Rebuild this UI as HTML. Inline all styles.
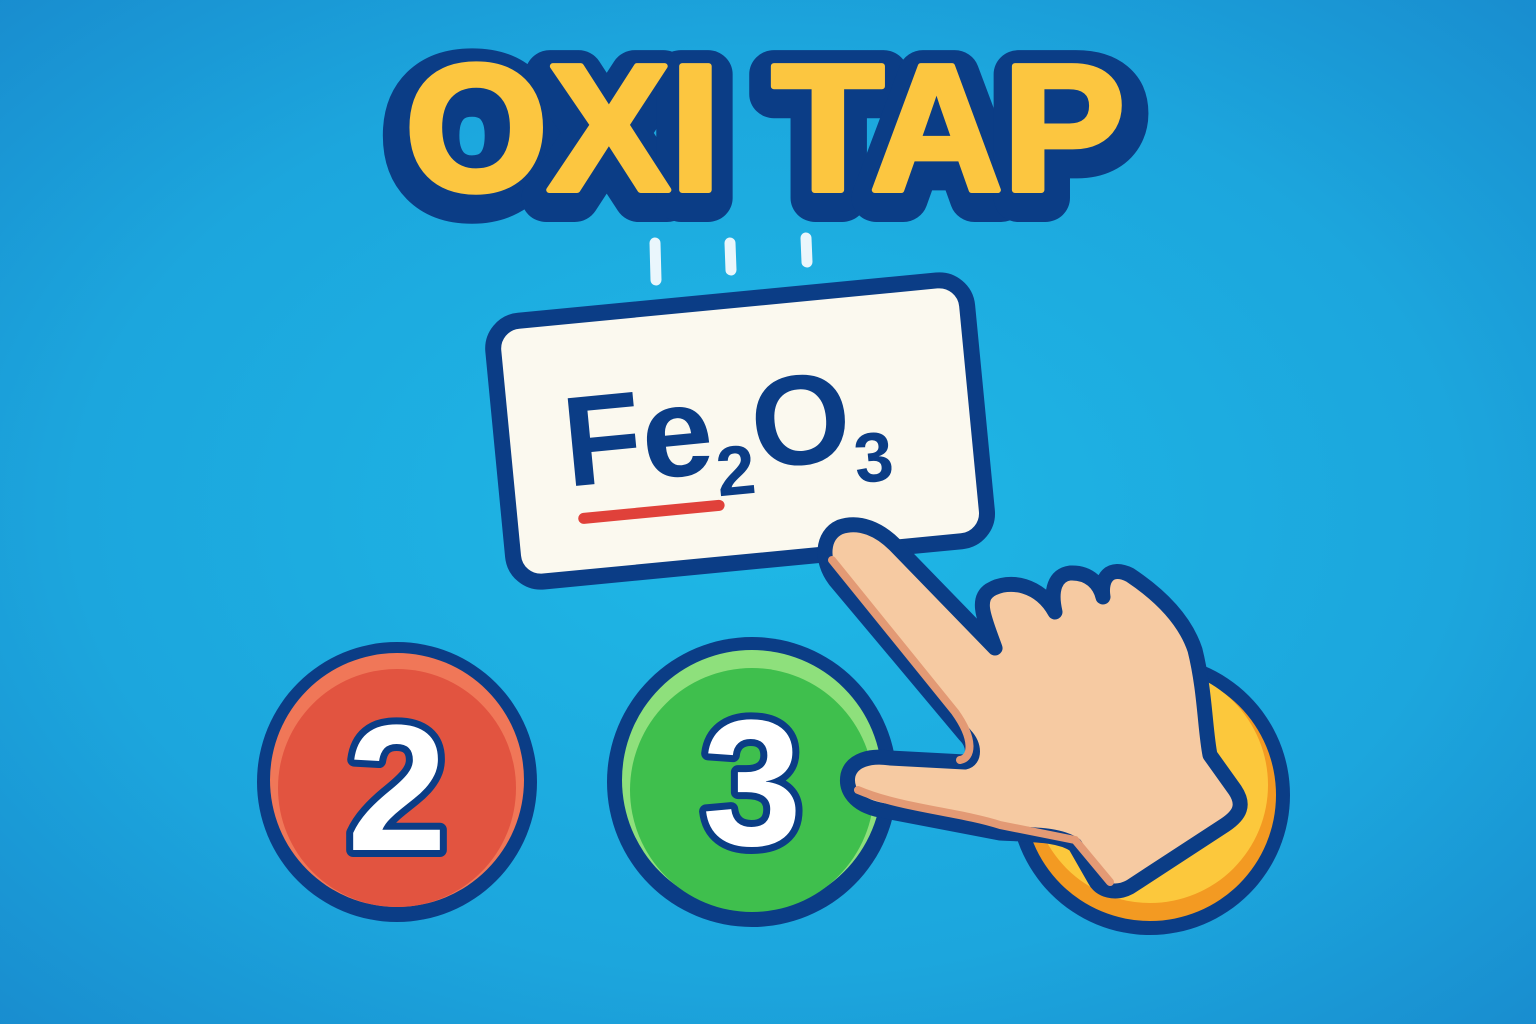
<!DOCTYPE html>
<html><head><meta charset="utf-8"><style>
html,body{margin:0;padding:0;width:1536px;height:1024px;overflow:hidden}
svg{display:block}
</style></head><body>
<svg width="1536" height="1024" viewBox="0 0 1536 1024" xmlns="http://www.w3.org/2000/svg">
<defs>
<radialGradient id="bg" cx="0.5" cy="0.5" r="0.75">
<stop offset="0" stop-color="#1fb8e6"/><stop offset="0.6" stop-color="#1ca6dd"/><stop offset="1" stop-color="#1889cd"/>
</radialGradient>
</defs>
<rect width="1536" height="1024" fill="url(#bg)"/>
<g font-family="Liberation Sans, sans-serif" font-weight="bold" font-size="180" text-anchor="middle">
<text x="765" y="198" fill="#0b3d86" stroke="#0b3d86" stroke-width="48" stroke-linejoin="round" textLength="730" lengthAdjust="spacingAndGlyphs">OXI TAP</text>
<text x="765" y="190" fill="#fcc640" stroke="#fcc640" stroke-width="6" stroke-linejoin="round" textLength="720" lengthAdjust="spacingAndGlyphs">OXI TAP</text>
</g>
<g stroke="#eaf6fc" stroke-width="11" stroke-linecap="round">
<line x1="655" y1="243" x2="656" y2="280"/><line x1="730" y1="243" x2="731" y2="270"/><line x1="806" y1="238" x2="807" y2="262"/>
</g>
<g transform="rotate(-5.5 740 430)">
<rect x="502" y="300" width="476" height="262" rx="28" fill="#fbf9ef" stroke="#0b3d86" stroke-width="16"/>
<text x="563" y="470" font-family="Liberation Sans, sans-serif" font-weight="bold" font-size="128" fill="#0b3d86">Fe<tspan font-size="70" dy="24">2</tspan><tspan dy="-24">O</tspan><tspan font-size="70" dy="24">3</tspan></text>
<line x1="576" y1="503" x2="712" y2="503" stroke="#e0413a" stroke-width="11" stroke-linecap="round"/>
</g>
<circle cx="397" cy="782" r="140" fill="#0b3d86"/>
<circle cx="397" cy="780" r="127" fill="#f07758"/>
<circle cx="397" cy="788" r="119" fill="#e25440"/>
<text x="397" y="850" text-anchor="middle" font-family="Liberation Sans, sans-serif" font-weight="bold" font-size="180" fill="#fff" stroke="#0b3d86" stroke-width="14" paint-order="stroke" stroke-linejoin="round">2</text>
<circle cx="1150" cy="795" r="140" fill="#0b3d86"/>
<circle cx="1150" cy="795" r="126" fill="#f39a22"/>
<circle cx="1150" cy="785" r="118" fill="#fcc83c"/>
<circle cx="752" cy="782" r="145" fill="#0b3d86"/>
<circle cx="752" cy="780" r="130" fill="#8ee07c"/>
<circle cx="752" cy="790" r="122" fill="#3fbf4d"/>
<text x="752" y="845" text-anchor="middle" font-family="Liberation Sans, sans-serif" font-weight="bold" font-size="180" fill="#fff" stroke="#0b3d86" stroke-width="14" paint-order="stroke" stroke-linejoin="round">3</text>
<path d="M 840,527 C 860,520 880,530 895,545 L 995,648 C 985,620 975,600 990,590 C 1010,578 1040,585 1055,612 C 1050,590 1055,575 1070,573 C 1090,572 1100,585 1103,597 C 1100,578 1110,565 1130,575 C 1160,595 1185,620 1195,650 C 1205,690 1205,730 1210,755 L 1235,790 C 1245,805 1240,815 1225,825 L 1130,887 C 1115,895 1100,890 1095,880 L 1075,845 C 1060,835 1040,835 1000,833 L 880,810 C 855,805 845,790 848,775 C 852,760 870,755 890,758 L 965,762 C 975,760 975,745 965,735 L 835,580 C 820,560 822,535 840,527 Z" fill="#f6caa2" stroke="#0b3d86" stroke-width="15" stroke-linejoin="round"/>
<path d="M 832,560 L 955,712 C 975,740 972,758 960,760 M 858,790 C 900,808 960,812 1000,825 L 1075,840 L 1110,882" fill="none" stroke="#e39a75" stroke-width="8" stroke-linecap="round"/>
</svg>
</body></html>
